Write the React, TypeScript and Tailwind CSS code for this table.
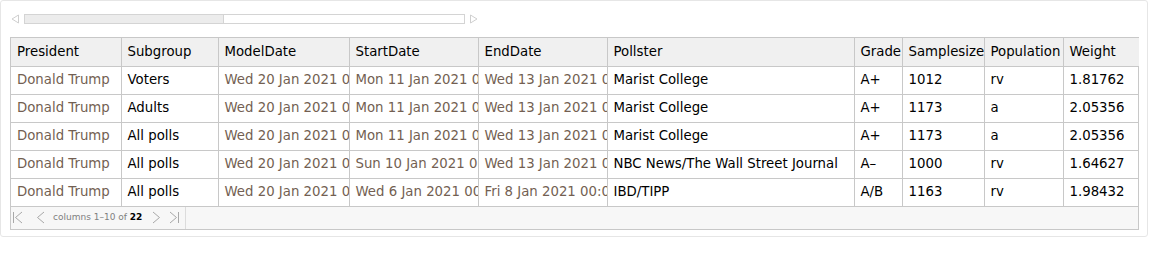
const cols = [
  { name: "President", w: 110 },
  { name: "Subgroup", w: 97 },
  { name: "ModelDate", w: 131 },
  { name: "StartDate", w: 129 },
  { name: "EndDate", w: 129 },
  { name: "Pollster", w: 247 },
  { name: "Grade", w: 48 },
  { name: "Samplesize", w: 82 },
  { name: "Population", w: 79 },
  { name: "Weight", w: 76 },
];

// columns that render as "expression" values get the brown tint
const tinted = [true, false, true, true, true, false, false, false, false, false];

const rows = [
  ["Donald Trump", "Voters", "Wed 20 Jan 2021 00:00:00", "Mon 11 Jan 2021 00:00:00", "Wed 13 Jan 2021 00:00:00", "Marist College", "A+", "1012", "rv", "1.81762"],
  ["Donald Trump", "Adults", "Wed 20 Jan 2021 00:00:00", "Mon 11 Jan 2021 00:00:00", "Wed 13 Jan 2021 00:00:00", "Marist College", "A+", "1173", "a", "2.05356"],
  ["Donald Trump", "All polls", "Wed 20 Jan 2021 00:00:00", "Mon 11 Jan 2021 00:00:00", "Wed 13 Jan 2021 00:00:00", "Marist College", "A+", "1173", "a", "2.05356"],
  ["Donald Trump", "All polls", "Wed 20 Jan 2021 00:00:00", "Sun 10 Jan 2021 00:00:00", "Wed 13 Jan 2021 00:00:00", "NBC News/The Wall Street Journal", "A–", "1000", "rv", "1.64627"],
  ["Donald Trump", "All polls", "Wed 20 Jan 2021 00:00:00", "Wed 6 Jan 2021 00:00:00", "Fri 8 Jan 2021 00:00:00", "IBD/TIPP", "A/B", "1163", "rv", "1.98432"],
];

export default function App() {
  return (
    <div className="w-[1150px] h-[258px] bg-white font-['DejaVu_Sans',Verdana,sans-serif] text-[13.3px] text-black">
      <div className="w-[1148px] h-[237px] border border-[#e6e6e6] rounded-[3px] px-[9px] pt-[10px]">
        {/* horizontal scroller */}
        <div className="flex items-center h-[16px] gap-[5px] pl-[1px]">
          <svg width="8" height="10" viewBox="0 0 8 10" className="text-[#cfcfcf]">
            <path d="M7.5 1 L1 5 L7.5 9 Z" fill="none" stroke="currentColor" strokeWidth="1" />
          </svg>
          <div className="w-[441px] h-[10px] border border-[#d4d4d4] bg-white flex">
            <div className="w-[199px] h-full bg-[#ececec] border-r border-[#d4d4d4]" />
          </div>
          <svg width="8" height="10" viewBox="0 0 8 10" className="text-[#cfcfcf]">
            <path d="M0.5 1 L7 5 L0.5 9 Z" fill="none" stroke="currentColor" strokeWidth="1" />
          </svg>
        </div>

        <div className="mt-[10px] w-[1129px] border border-[#c8c8c8]">
          <table className="table-fixed border-collapse w-full">
            <colgroup>
              {cols.map((c) => (
                <col key={c.name} style={{ width: c.w }} />
              ))}
            </colgroup>
            <thead>
              <tr className="bg-[#f0f0f0] h-[28px]">
                {cols.map((c, i) => (
                  <th
                    key={c.name}
                    className={`font-normal text-left p-0 border-b border-[#c8c8c8] ${i > 0 ? "border-l" : ""}`}
                  >
                    <div className="pl-[6px] whitespace-nowrap overflow-hidden">{c.name}</div>
                  </th>
                ))}
              </tr>
            </thead>
            <tbody>
              {rows.map((r, ri) => (
                <tr key={ri} className="h-[28px]">
                  {r.map((v, i) => (
                    <td
                      key={i}
                      className={`p-0 border-b border-[#c8c8c8] ${i > 0 ? "border-l" : ""} ${tinted[i] ? "text-[#735f52]" : "text-black"}`}
                    >
                      <div className="pl-[6px] whitespace-nowrap overflow-hidden">{v}</div>
                    </td>
                  ))}
                </tr>
              ))}
            </tbody>
          </table>
          {/* column pager */}
          <div className="h-[22px] bg-[#f7f7f7] flex items-center">
            <div className="flex items-center h-full border-r border-[#dcdcdc] pl-[1px] pr-[5px] text-[#a8a8a8]">
              <svg width="11" height="13" viewBox="0 0 11 13">
                <path d="M1.5 1 V12 M10 1 L3.5 6.5 L10 12" fill="none" stroke="currentColor" strokeWidth="1" />
              </svg>
              <svg width="9" height="13" viewBox="0 0 9 13" className="ml-[13px]">
                <path d="M8 1 L1.5 6.5 L8 12" fill="none" stroke="currentColor" strokeWidth="1" />
              </svg>
              <span className="ml-[8px] text-[9px] text-[#808080] font-['DejaVu_Sans',sans-serif]">
                columns 1–10 of <b className="text-black">22</b>
              </span>
              <svg width="9" height="13" viewBox="0 0 9 13" className="ml-[10px]">
                <path d="M1 1 L7.5 6.5 L1 12" fill="none" stroke="currentColor" strokeWidth="1" />
              </svg>
              <svg width="11" height="13" viewBox="0 0 11 13" className="ml-[8px]">
                <path d="M1 1 L7.5 6.5 L1 12 M9.5 1 V12" fill="none" stroke="currentColor" strokeWidth="1" />
              </svg>
            </div>
          </div>
        </div>
      </div>
    </div>
  );
}
